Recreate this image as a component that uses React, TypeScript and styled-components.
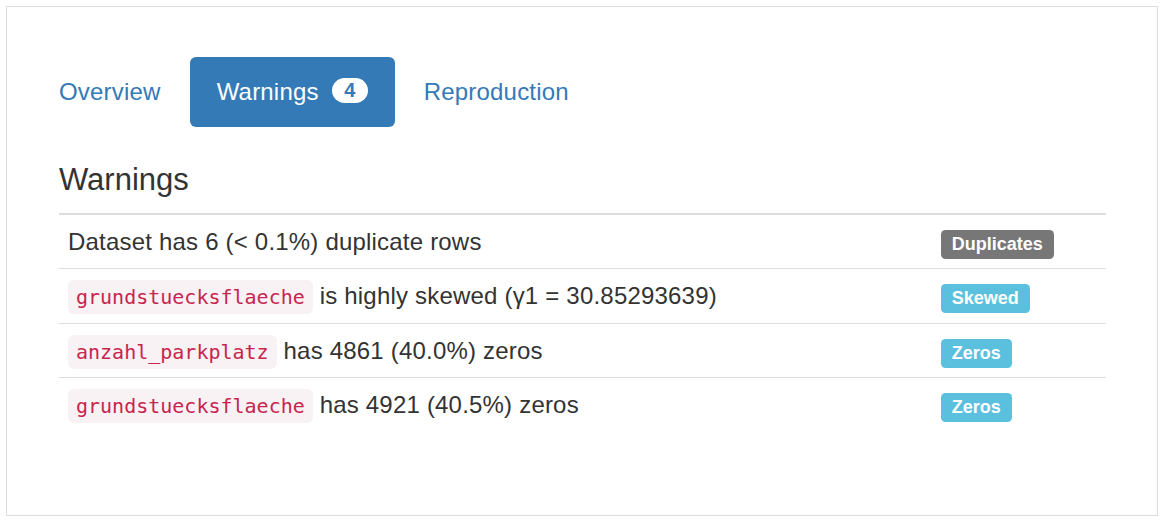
import React from "react";
import styled, { createGlobalStyle } from "styled-components";

const GlobalStyle = createGlobalStyle`
  html, body { margin: 0; padding: 0; background: #fff; }
  body { font-family: "Liberation Sans", Arial, sans-serif; color: #333; }
`;

const Panel = styled.div`
  box-sizing: border-box;
  margin: 6px 0 0 6px;
  width: 1152px;
  height: 510px;
  border: 1px solid #dcdcdc;
  padding: 50px 51px 0 25px;
`;

const Nav = styled.ul`
  list-style: none;
  margin: 0;
  padding: 0;
  display: flex;
  gap: 2px;
`;

const NavItem = styled.li``;

const NavLink = styled.a<{ $active?: boolean }>`
  display: flex;
  align-items: center;
  gap: 13px;
  padding: 18px 27px;
  font-size: 24px;
  line-height: 34px;
  letter-spacing: 0.2px;
  border-radius: 6px;
  text-decoration: none;
  cursor: pointer;
  color: ${(p) => (p.$active ? "#fff" : "#337ab7")};
  background: ${(p) => (p.$active ? "#337ab7" : "transparent")};
`;

const Count = styled.span`
  display: inline-block;
  box-sizing: border-box;
  height: 25px;
  min-width: 36px;
  padding: 0 12px;
  margin-bottom: 3px;
  border-radius: 13px;
  background: #fff;
  color: #337ab7;
  font-size: 20px;
  font-weight: bold;
  line-height: 25px;
  letter-spacing: 0;
  text-align: center;
`;

const Section = styled.section`
  padding-left: 27px;
`;

const Heading = styled.h3`
  margin: 36px 0 15.5px;
  font-size: 31px;
  font-weight: normal;
  line-height: 34px;
  color: #333;
`;

const Table = styled.table`
  width: 100%;
  border-collapse: collapse;
  border-top: 2px solid #ddd;
`;

const Row = styled.tr`
  & + & td {
    border-top: 1px solid #ddd;
  }
`;

const Cell = styled.td<{ $narrow?: boolean }>`
  padding: 10px 9px;
  vertical-align: top;
  font-size: 24px;
  line-height: 33.5px;
  letter-spacing: 0.2px;
  color: #333;
  width: ${(p) => (p.$narrow ? "156px" : "auto")};
`;

const Code = styled.code`
  font-family: "DejaVu Sans Mono", monospace;
  font-size: 20px;
  line-height: 1;
  letter-spacing: 0;
  padding: 5px 8px;
  color: #c7254e;
  background: #f9f2f4;
  border-radius: 6px;
`;

const Label = styled.span<{ $kind: "default" | "info" }>`
  display: inline;
  padding: 3.6px 10.8px 5.4px;
  font-size: 18px;
  font-weight: bold;
  line-height: 1;
  letter-spacing: 0;
  color: #fff;
  border-radius: 4.5px;
  white-space: nowrap;
  background: ${(p) => (p.$kind === "default" ? "#777" : "#5bc0de")};
`;

type Warning = { column?: string; text: string; label: string; kind: "default" | "info" };

const warnings: Warning[] = [
  { text: "Dataset has 6 (< 0.1%) duplicate rows", label: "Duplicates", kind: "default" },
  { column: "grundstuecksflaeche", text: "is highly skewed (γ1 = 30.85293639)", label: "Skewed", kind: "info" },
  { column: "anzahl_parkplatz", text: "has 4861 (40.0%) zeros", label: "Zeros", kind: "info" },
  { column: "grundstuecksflaeche", text: "has 4921 (40.5%) zeros", label: "Zeros", kind: "info" },
];

export default function App() {
  return (
    <>
      <GlobalStyle />
      <Panel>
        <Nav>
          <NavItem>
            <NavLink>Overview</NavLink>
          </NavItem>
          <NavItem>
            <NavLink $active>
              Warnings <Count>4</Count>
            </NavLink>
          </NavItem>
          <NavItem>
            <NavLink>Reproduction</NavLink>
          </NavItem>
        </Nav>
        <Section>
          <Heading>Warnings</Heading>
          <Table>
            <tbody>
              {warnings.map((w, i) => (
                <Row key={i}>
                  <Cell>
                    {w.column && (
                      <>
                        <Code>{w.column}</Code>{" "}
                      </>
                    )}
                    {w.text}
                  </Cell>
                  <Cell $narrow>
                    <Label $kind={w.kind}>{w.label}</Label>
                  </Cell>
                </Row>
              ))}
            </tbody>
          </Table>
        </Section>
      </Panel>
    </>
  );
}
